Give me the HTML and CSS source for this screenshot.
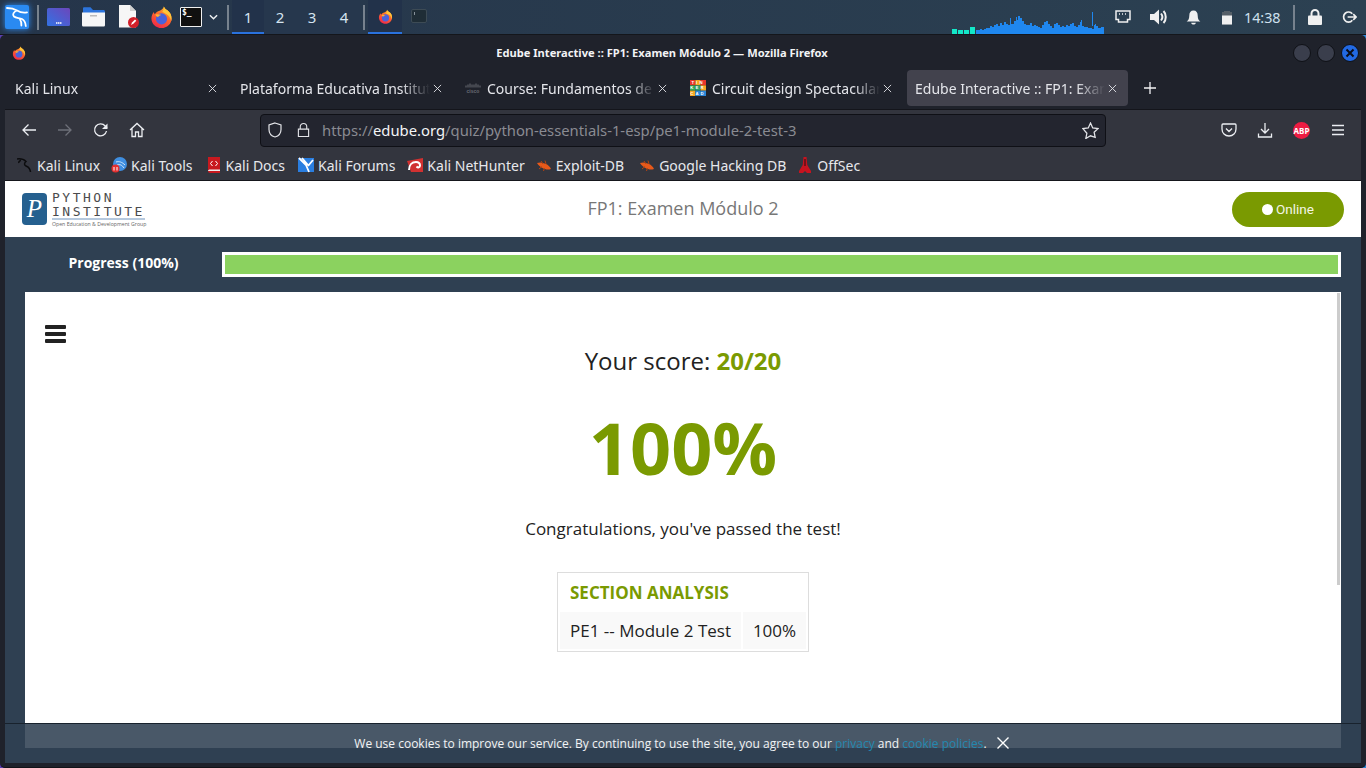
FILE: index.html
```html
<!DOCTYPE html>
<html lang="en">
<head>
<meta charset="utf-8">
<title>Edube Interactive :: FP1: Examen Módulo 2</title>
<link rel="stylesheet" href="styles.css">
</head>
<body>
<svg class="defs" width="0" height="0" aria-hidden="true">
  <defs>
    <linearGradient id="ffBody" x1="0.8" y1="0" x2="0.3" y2="1">
      <stop offset="0" stop-color="#ffbd2e"/><stop offset="0.45" stop-color="#ff6a2b"/><stop offset="1" stop-color="#f0284a"/>
    </linearGradient>
    <linearGradient id="launcher" x1="0" y1="1" x2="1" y2="0">
      <stop offset="0" stop-color="#3273e4"/><stop offset="1" stop-color="#6c46bb"/>
    </linearGradient>
    <symbol id="firefox" viewBox="0 0 24 24">
      <path d="M14.500 1c.6 2.200 2.400 3 4 4.300 2.700 2.200 4 5 4 8.200 0 5.800-4.700 10-10.500 10S1.500 19.300 1.500 13.500c0-2.600 1-5.100 2.600-6.800 0 1 .3 1.800 1 2.500C6 6.800 8 6.300 10 5.500c2.200-.9 4-2.300 4.500-4.500z" fill="url(#ffBody)"/>
      <path d="M14.500 1c.6 2.200 2.400 3 4 4.300 2.700 2.200 4 5 4 8.200 0 1-.1 1.800-.4 2.600-.6-3.500-2.600-6.200-5.600-7.600-1.200-.6-2.600-1-3.700-1.900C13.700 5.500 14.500 3.500 14.500 1z" fill="#ffc53a"/>
      <circle cx="12" cy="14" r="5.800" fill="#4a62dc"/>
      <path d="M5.500 9.500c2-.6 4.500-.6 6.500.5-1.500.2-3 1-3.500 2.200-1.300-.3-2.400-1.300-3-2.700z" fill="#ffb02e"/>
    </symbol>
    <symbol id="bug" viewBox="0 0 16 16">
      <path d="M1 6c3-1 6-.5 9 1 2 1 4 2.500 5 5-3 1-6 .5-8.500-1C4.500 10 2.500 8.500 1 6z" fill="#e8591a"/>
      <path d="M5 4l2 3M9 3.500l1 3.500M3 12l3-2.500M7.500 14l1-3" stroke="#b8430f" stroke-width="1" fill="none"/>
    </symbol>
  </defs>
</svg>

<header class="panel">
  <div class="kali-btn">
    <svg class="kali-logo" viewBox="0 0 24 24"><rect x="0" y="0" width="24" height="24" rx="2" fill="#2a8af2"/><path d="M2 3c4 0 7 .6 10 2.500 3 1.800 6 2.500 10 1.800M12 5.500C8.500 7 7 9.500 9 11.500c2 1.800 5.500 1.200 8 2.500 2.300 1.200 3.500 3.500 3.800 7M15 14.500c1.200 1.500 1.600 3.500 1.400 6" fill="none" stroke="#fff" stroke-width="1.800" stroke-linecap="round"/></svg>
  </div>
  <span class="sep"></span>
  <div class="launchers">
    <svg class="launch" viewBox="0 0 23 24"><rect y="3" width="23" height="18" rx="1.500" fill="url(#launcher)"/><path d="M9 18h1.500M11 18h1.500M13 18h1.500" stroke="#fff" stroke-width="1.500"/></svg>
    <svg class="launch" viewBox="0 0 23 24"><path d="M1 7V3.500c0-.8.500-1.200 1.200-1.200h6.300L11 5h10.500c.8 0 1.500.7 1.500 1.500V8H1z" fill="#2c74dc"/><path d="M0 7.500h23V20c0 1-.7 1.500-1.500 1.500h-20C.7 21.500 0 21 0 20z" fill="#f6f6f6"/><path d="M8 10h7v1.500H8z" fill="#bbb"/></svg>
    <svg class="launch doc" viewBox="0 0 22 24"><path d="M1 0h11l6 6v16.500H1z" fill="#f6f6f6"/><path d="M12 0l6 6h-6z" fill="#d0d0d0"/><circle cx="15.500" cy="17.500" r="5.500" fill="#d2202a"/><path d="M13 20l1-2.500 3-3 1.300 1.300-3 3z" fill="#fff"/></svg>
    <svg class="launch ff" viewBox="0 0 24 24"><use href="#firefox"/></svg>
    <div class="term-ico"><span class="term-txt">$_</span></div>
    <svg class="chev" viewBox="0 0 10 6"><path d="M1 1l4 4 4-4" fill="none" stroke="#eef0f2" stroke-width="1.600"/></svg>
  </div>
  <span class="sep"></span>
  <nav class="pager">
    <span class="desk is-on">1</span><span class="desk">2</span><span class="desk">3</span><span class="desk">4</span>
  </nav>
  <span class="sep sep-c"></span>
  <div class="task is-on"><svg class="task-ff" viewBox="0 0 24 24"><use href="#firefox"/></svg></div>
  <div class="task"><div class="term-dim"><span></span></div></div>
  <div class="spacer"></div>
  <div class="meter">
    <span class="lvl lvl-5"></span><span class="lvl lvl-3"></span><span class="lvl lvl-3"></span><span class="lvl lvl-7"></span>
  </div>
  <svg class="graph" viewBox="0 0 128 22"><path fill="#1f87ef" d="M0 22V18H4V17H6V18H8V17H10V16H14V14H16V15H18V13H20V12H22V14H24V11H26V13H28V10H30V12H32V13H34V6H35V12H38V9H40V5H41V8H42V4H44V6H46V9H48V12H50V13H54V11H56V14H58V13H60V14H62V15H64V16H66V13H68V10H70V9H72V12H74V14H76V16H78V12H80V11H82V13H84V15H86V14H88V15H90V13H92V14H94V12H96V11H98V14H100V15H102V13H104V10H105V8H106V14H108V15H112V16H116V17H118V13H119V12H120V14H122V16H125V15H128V22Z"/><path d="M116.500 0v14" stroke="#1f87ef" stroke-width="1"/></svg>
  <div class="tray">
    <svg class="tray-i" viewBox="0 0 16 14"><path d="M1 1h14v8.500h-2.500V12h-9V9.500H1z" fill="none" stroke="#f0f0f0" stroke-width="1.500"/><path d="M4 4h1M7 4h1M10 4h1" stroke="#f0f0f0" stroke-width="1.500"/></svg>
    <svg class="tray-i" viewBox="0 0 18 16"><path d="M0 5h4l5-4.500v15L4 11H0z" fill="#f0f0f0"/><path d="M11 4.500c1.600 2 1.600 5 0 7M13.500 2c3 3 3 9 0 12" fill="none" stroke="#f0f0f0" stroke-width="2"/></svg>
    <svg class="tray-i" viewBox="0 0 16 16"><path d="M8 .5c3 0 4.500 2.200 4.500 5.500 0 3 .8 4.500 2.800 6.300H.7C2.700 10.500 3.500 9 3.500 6 3.500 2.700 5 .5 8 .5z" fill="#f0f0f0"/><path d="M5.500 13.500h5c0 1.200-1.200 2-2.500 2s-2.500-.8-2.500-2z" fill="#f0f0f0"/></svg>
    <svg class="tray-b" viewBox="0 0 10 14"><path d="M2 1.500V.5h6v1h2V14H0V1.500z" fill="#555f68"/><path d="M0 5h10v9H0z" fill="#f0f0f0"/></svg>
    <time class="clock">14:38</time>
    <span class="sep sep-d"></span>
    <svg class="tray-l" viewBox="0 0 14 16"><path d="M3.500 7V4.500a3.500 3.500 0 017 0V7" fill="none" stroke="#f0f0f0" stroke-width="2"/><rect y="6.500" width="14" height="9.500" rx="1" fill="#f0f0f0"/></svg>
    <svg class="tray-o" viewBox="0 0 16 14"><path d="M11 3.500A5 5 0 103 10.500a5 5 0 008 0" fill="none" stroke="#f0f0f0" stroke-width="1.800"/><path d="M6 7h9M12 4l3 3-3 3" fill="none" stroke="#f0f0f0" stroke-width="1.800"/></svg>
  </div>
</header>

<div class="window">
  <div class="titlebar">
    <svg class="title-ff" viewBox="0 0 24 24"><use href="#firefox"/></svg>
    <h1 class="title">Edube Interactive :: FP1: Examen Módulo 2 — Mozilla Firefox</h1>
    <div class="winbtns">
      <span class="winbtn"></span><span class="winbtn"></span>
      <span class="winbtn winbtn-close"><svg viewBox="0 0 10 10"><path d="M1.500 1.500l7 7M8.500 1.500l-7 7" stroke="#0b0e18" stroke-width="2"/></svg></span>
    </div>
  </div>

  <div class="tabs">
    <div class="tab"><span class="tab-label">Kali Linux</span><svg class="tab-x" viewBox="0 0 10 10"><path d="M1 1l8 8M9 1l-8 8"/></svg></div>
    <div class="tab"><span class="tab-label">Plataforma Educativa Instituto</span><svg class="tab-x" viewBox="0 0 10 10"><path d="M1 1l8 8M9 1l-8 8"/></svg></div>
    <div class="tab">
      <svg class="tab-ico" viewBox="0 0 16 16"><path d="M1 5.500v2M3 4.500v3M5 3.500v4M7 4.500v3M9 4.500v3M11 3.500v4M13 4.500v3M15 5.500v2" stroke="#6a6c74" stroke-width="1"/><text x="8" y="13" text-anchor="middle" class="cisco">cisco</text></svg>
      <span class="tab-label">Course: Fundamentos de Python</span><svg class="tab-x" viewBox="0 0 10 10"><path d="M1 1l8 8M9 1l-8 8"/></svg>
    </div>
    <div class="tab">
      <svg class="tab-ico" viewBox="0 0 15 15"><rect width="5" height="5" fill="#e8352b"/><rect x="5" width="5" height="5" fill="#f5a623"/><rect x="10" width="5" height="5" fill="#e8352b"/><rect y="5" width="5" height="5" fill="#36a853"/><rect x="5" y="5" width="5" height="5" fill="#2e9e6a"/><rect x="10" y="5" width="5" height="5" fill="#f5a623"/><rect y="10" width="5" height="5" fill="#f5a623"/><rect x="5" y="10" width="5" height="5" fill="#2b87d8"/><rect x="10" y="10" width="5" height="5" fill="#2b87d8"/><text class="tink" x="7.500" y="3.800">TIN</text><text class="tink" x="7.500" y="8.800">KER</text><text class="tink" x="7.500" y="13.800">CAD</text></svg>
      <span class="tab-label">Circuit design Spectacular Jaagub</span><svg class="tab-x" viewBox="0 0 10 10"><path d="M1 1l8 8M9 1l-8 8"/></svg>
    </div>
    <div class="tab is-active"><span class="tab-label">Edube Interactive :: FP1: Examen</span><svg class="tab-x" viewBox="0 0 10 10"><path d="M1 1l8 8M9 1l-8 8"/></svg></div>
    <svg class="newtab" viewBox="0 0 12 12"><path d="M6 0v12M0 6h12"/></svg>
  </div>

  <div class="navbar">
    <svg class="nav-i nav-back" viewBox="0 0 16 16"><path d="M15 8H2M7.500 2.500L2 8l5.500 5.500"/></svg>
    <svg class="nav-i nav-fwd" viewBox="0 0 16 16"><path d="M1 8h13M8.500 2.500L14 8l-5.500 5.500"/></svg>
    <svg class="nav-i nav-rel" viewBox="0 0 16 16"><path d="M13.500 9a6 6 0 11-1.300-5L14 6"/><path class="fillme" d="M14.500 1.500V7H9z"/></svg>
    <svg class="nav-i nav-home" viewBox="0 0 16 16"><path d="M1 8l7-6.500L15 8M3 6.500V14.500h3.500V10h3v4.500H13V6.500"/></svg>
    <div class="urlbar">
      <svg class="url-i url-shield" viewBox="0 0 16 16"><path d="M8 1l6 2v4.500c0 4-2.500 6.500-6 7.500-3.500-1-6-3.500-6-7.500V3z"/></svg>
      <svg class="url-i url-lock" viewBox="0 0 14 16"><path d="M3.500 7V4.500a3.500 3.500 0 017 0V7M1.500 7h11v8h-11z"/></svg>
      <span class="url"><span class="url-dim">https://</span>edube.org<span class="url-dim">/quiz/python-essentials-1-esp/pe1-module-2-test-3</span></span>
      <svg class="url-i url-star" viewBox="0 0 16 16"><path d="M8 1l2.100 4.600 5 .6-3.700 3.400 1 4.900L8 13l-4.400 2.500 1-4.900L.9 6.200l5-.6z"/></svg>
    </div>
    <div class="nav-right">
      <svg class="nav-i" viewBox="0 0 16 16"><path d="M2 2h12c.6 0 1 .4 1 1v4c0 4-3 7-7 7s-7-3-7-7V3c0-.6.400-1 1-1zM5 6.500l3 3 3-3"/></svg>
      <svg class="nav-i" viewBox="0 0 16 16"><path d="M8 1v9.500M4 7l4 4 4-4M1.500 11.500V15h13v-3.500"/></svg>
      <div class="abp">ABP</div>
      <svg class="nav-i" viewBox="0 0 16 16"><path d="M2 3.500h12M2 8h12M2 12.500h12"/></svg>
    </div>
  </div>

  <div class="bookmarks">
    <a class="bm"><svg class="bm-i" viewBox="0 0 16 16"><path d="M0 2c4-.5 7 .5 9 2.500C7 6 7 8 9 9c2 1 4 1.500 4.500 6M4 3.500C2 4 1.500 5 2 6" fill="none" stroke="#0c0c0e" stroke-width="1.500"/></svg>Kali Linux</a>
    <a class="bm"><svg class="bm-i" viewBox="0 0 16 16"><circle cx="9" cy="7" r="7" fill="#3f8ee0"/><path d="M5 5c3-1 6 0 9 3M6 8c3-1 5 0 7 3" stroke="#cfe6fa" fill="none"/><circle cx="4.500" cy="11.500" r="4" fill="#e43030"/><path d="M3 10v3.500M6 10v3.500" stroke="#fff"/></svg>Kali Tools</a>
    <a class="bm"><svg class="bm-i" viewBox="0 0 14 16"><path d="M1 0h12v16H3c-1 0-2-.8-2-2z" fill="#c8191f"/><path d="M1 14c0-1 1-1.500 2-1.500h10V14H3z" fill="#eee"/><path d="M5.500 4L3.500 6.500 5.500 9M8.500 4l2 2.500-2 2.500" stroke="#fff" fill="none"/></svg>Kali Docs</a>
    <a class="bm"><svg class="bm-i" viewBox="0 0 16 16"><rect y="1" width="16" height="14" fill="#2a7ee0"/><path d="M1 1l7 7 3 7M4 1l6 7M15 3l-5 6" stroke="#fff" stroke-width="1.800" fill="none"/></svg>Kali Forums</a>
    <a class="bm"><svg class="bm-i" viewBox="0 0 16 16"><path d="M0 4l16-3v14H4z" fill="#d13131"/><path d="M2 13c0-5 3-8 7-8 2.500 0 4 1.500 4 3.500S11 11 9.500 9.500" fill="none" stroke="#fff" stroke-width="2"/></svg>Kali NetHunter</a>
    <a class="bm"><svg class="bm-i" viewBox="0 0 16 16"><use href="#bug"/></svg>Exploit-DB</a>
    <a class="bm"><svg class="bm-i" viewBox="0 0 16 16"><use href="#bug"/></svg>Google Hacking DB</a>
    <a class="bm"><svg class="bm-i" viewBox="0 0 14 16"><path d="M5.500 0h3l.8 8 3.700 6v2H9L7 14l-2 2H1v-2l3.700-6z" fill="#c7131f"/><path d="M6.500 2h1v7h-1z" fill="#2a0c10"/></svg>OffSec</a>
  </div>

  <main class="page">
    <div class="site-head">
      <div class="logo">
        <div class="logo-mark">P</div>
        <div class="logo-text">
          <span class="logo-l1">PYTHON</span>
          <span class="logo-l2">INSTITUTE</span>
          <span class="logo-l3">Open Education &amp; Development Group</span>
        </div>
      </div>
      <h2 class="quiz-name">FP1: Examen Módulo 2</h2>
      <div class="head-end"><div class="online"><span class="dot"></span>Online</div></div>
    </div>

    <div class="progress-row">
      <div class="progress-label">Progress (100%)</div>
      <div class="progress-track"><div class="progress-fill"></div></div>
    </div>

    <section class="card">
      <div class="burger"><span></span><span></span><span></span></div>
      <p class="score">Your score: <b>20/20</b></p>
      <p class="percent">100%</p>
      <p class="congrats">Congratulations, you've passed the test!</p>
      <table class="analysis">
        <colgroup><col class="col-name"><col class="col-val"></colgroup>
        <tr><th colspan="2">SECTION ANALYSIS</th></tr>
        <tr><td class="c-name">PE1 -- Module 2 Test</td><td class="c-val">100%</td></tr>
      </table>
      <div class="scrollthumb"></div>
    </section>

    <div class="cookie">
      <span>We use cookies to improve our service. By continuing to use the site, you agree to our <a class="lnk">privacy</a> and <a class="lnk">cookie policies</a>.</span>
      <svg class="cookie-x" viewBox="0 0 12 12"><path d="M.5.500l11 11M11.500.500l-11 11"/></svg>
    </div>
  </main>
</div>
</body>
</html>
```
FILE: styles.css
```css
* { box-sizing: border-box; }
html, body { margin: 0; padding: 0; }
body {
  width: 1366px; height: 768px; overflow: hidden;
  display: flex; flex-direction: column;
  font-family: "Noto Sans", sans-serif;
  background: linear-gradient(45deg, #5a3fb0 0 50%, #2a86d8 50% 100%);
}
.defs { position: absolute; }

/* desktop panel */
.panel {
  height: 35px; flex: none; display: flex; align-items: flex-start;
  background: linear-gradient(90deg, #25354a, #2c4152);
  border-bottom: 1px solid #14161b;
  color: #dfe8f0;
}
.kali-btn { width: 37px; height: 34px; padding: 5px 0 0 5px; flex: none; }
.kali-logo { width: 24px; height: 24px; display: block; filter: drop-shadow(0 0 3px #2a8af2); }
.sep { width: 2px; height: 25px; margin-top: 5px; background: #77828e; flex: none; }
.launchers { display: flex; align-items: center; height: 34px; width: 188px; flex: none; }
.launch { flex: none; width: 23px; height: 24px; display: block; }
.launchers .launch:nth-child(1) { margin-left: 8px; }
.launchers .launch:nth-child(2) { margin-left: 12px; }
.launchers .doc { margin-left: 13px; width: 22px; }
.launchers .ff { margin-left: 10px; margin-right: 7px; }
.term-ico { width: 22px; height: 20px; background: #101010; border: 1px solid #f0f0f0; border-radius: 1px; flex: none; }
.term-txt { display: block; font: bold 8px/10px "DejaVu Sans Mono", monospace; color: #fff; padding-left: 1px; }
.chev { width: 9px; height: 6px; margin-left: 7px; flex: none; }
.pager { display: flex; margin-left: 3px; flex: none; background: #26374d; }
.desk { width: 32px; height: 34px; text-align: center; font-size: 15px; line-height: 34px; color: #d5e4f0; border-bottom: 2px solid transparent; }
.is-on { background: #22324a; border-bottom: 2px solid #2a72de; }
.sep-c { margin-left: 3px; }
.task { width: 34px; height: 34px; display: flex; align-items: center; justify-content: center; flex: none; border-bottom: 2px solid transparent; }
.is-on.task { margin-left: 3px; border-bottom-color: #2a72de; }
.task-ff { width: 15px; height: 15px; }
.term-dim { width: 16px; height: 14px; background: #1f2d36; border: 1px solid #3d4b55; border-radius: 2px; }
.term-dim span { display: block; width: 4px; height: 3px; margin: 2px; border-left: 1px solid #87919a; }
.spacer { flex: 1; }
.meter { display: flex; align-items: flex-end; gap: 1px; height: 34px; width: 24px; flex: none; }
.lvl { width: 5px; background: #13e8c8; }
.lvl-3 { height: 4px; }
.lvl-5 { height: 5px; }
.lvl-7 { height: 7px; }
.graph { width: 128px; height: 22px; margin-top: 12px; flex: none; display: block; }
.tray { display: flex; align-items: center; height: 34px; flex: none; width: 262px; }
.tray-i { flex: none; display: block; }
.tray-i:nth-child(1) { width: 16px; height: 14px; margin-left: 11px; }
.tray-i:nth-child(2) { width: 18px; height: 16px; margin-left: 19px; }
.tray-i:nth-child(3) { width: 15px; height: 15px; margin-left: 18px; }
.tray-b { width: 10px; height: 15px; margin-left: 21px; flex: none; }
.clock { font-size: 14.300px; color: #cfe0ee; margin-left: 12px; width: 38px; flex: none; white-space: nowrap; }
.sep-d { margin: 0 0 0 11px; height: 25px; }
.tray-l { width: 14px; height: 16px; margin-left: 13px; flex: none; }
.tray-o { width: 15px; height: 14px; margin-left: 20px; flex: none; }

/* browser window */
.window {
  flex: 1; min-height: 0; display: flex; flex-direction: column;
  background: #1f222b; padding: 0 5px 4px;
  border-radius: 5px; border-bottom: 1px solid #111318;
}
.titlebar { height: 35px; flex: none; display: flex; align-items: center; margin: 0 -5px; position: relative; }
.title-ff { width: 14px; height: 14px; margin-left: 12px; flex: none; }
.title { position: absolute; left: 0; right: 42px; margin: 0; text-align: center; font-size: 11.130px; font-weight: 700; color: #f2f3f5; }
.winbtns { margin-left: auto; display: flex; gap: 6px; padding-right: 7px; }
.winbtn { width: 18px; height: 18px; border-radius: 50%; background: #3a3e4c; border: 1px solid #0f1116; display: block; }
.winbtn-close { background: #2269e2; padding: 3px; }
.winbtn-close svg { display: block; width: 10px; height: 10px; }

.tabs { height: 40px; flex: none; display: flex; gap: 4px; padding-left: 2px; border-bottom: 1px solid #14151b; }
.tab { width: 221px; height: 36px; padding: 0 8px; display: flex; align-items: center; flex: none; color: #e4e5ea; font-size: 14px; border-radius: 4px; }
.tab.is-active { background: #42424d; }
.tab-label { flex: 1; min-width: 0; white-space: nowrap; overflow: hidden; -webkit-mask-image: linear-gradient(90deg, #000 85%, transparent); mask-image: linear-gradient(90deg, #000 85%, transparent); }
.tab-ico { width: 16px; height: 16px; margin-right: 6px; flex: none; }
.cisco { font: 700 5px "Liberation Sans", sans-serif; fill: #6a6c74; }
.tink { font: 700 4px "Liberation Sans", sans-serif; fill: #fff; text-anchor: middle; letter-spacing: 2px; }
.tab-x { width: 9px; height: 9px; margin-left: 3px; margin-right: 3px; flex: none; }
.tab-x path { stroke: #e4e5ea; stroke-width: 1; fill: none; }
.newtab { width: 12px; height: 12px; margin: 12px 0 0 12px; flex: none; }
.newtab path { stroke: #f2f2f4; stroke-width: 1.300; fill: none; }

.navbar { height: 40px; flex: none; display: flex; align-items: center; background: #33353e; padding-left: 16px; }
.nav-i { width: 16px; height: 16px; flex: none; fill: none; stroke: #eceef2; stroke-width: 1.300; display: block; }
.nav-i .fillme { fill: #eceef2; stroke: none; }
.nav-fwd { margin-left: 20px; stroke: #6e7079; }
.nav-rel { margin-left: 20px; }
.nav-home { margin-left: 20px; }
.urlbar { width: 846px; height: 33px; margin-left: 115px; flex: none; display: flex; align-items: center; background: #23252f; border: 1px solid #0f1016; border-radius: 4px; padding: 0 6px; color: #f4f4f6; font-size: 14.800px; }
.url-i { fill: none; stroke: #e3e4e8; stroke-width: 1.200; flex: none; display: block; }
.url-shield { width: 16px; height: 16px; }
.url-lock { width: 13px; height: 16px; margin-left: 14px; }
.url { margin-left: 12px; flex: 1; white-space: nowrap; }
.url-dim { color: #8a8b92; }
.url-star { width: 17px; height: 17px; }
.nav-right { display: flex; align-items: center; gap: 20px; margin-left: 115px; }
.abp { width: 17px; height: 17px; flex: none; border-radius: 50%; background: #ed1c42; color: #fff; font-size: 8px; font-weight: 700; line-height: 17px; text-align: center; }

.bookmarks { height: 31px; flex: none; display: flex; align-items: center; background: #33353e; padding-left: 12px; border-bottom: 1px solid #15161b; gap: 11px; }
.bm { display: flex; align-items: center; gap: 4px; color: #e7e8ec; font-size: 14px; white-space: nowrap; }
.bm:nth-child(3), .bm:nth-child(4) { margin-left: 2px; }
.bm:nth-child(5) { margin-left: 1px; }
.bm:nth-child(7) { margin-left: 4px; }
.bm-i { width: 16px; height: 16px; flex: none; display: block; }

/* web page */
.page { flex: 1; min-height: 0; position: relative; display: flex; flex-direction: column; background: #2f4052; padding-bottom: 15px; overflow: hidden; font-family: "Open Sans", sans-serif; }
.site-head { height: 56px; flex: none; background: #fff; display: grid; grid-template-columns: 1fr auto 1fr; align-items: center; padding: 0 17px; }
.logo { display: flex; gap: 5px; align-items: flex-start; }
.logo-mark { width: 25px; height: 32px; margin-top: 2px; border-radius: 4px; background: #25608f; color: #fff; font: italic 25px/32px "Liberation Serif", serif; text-align: center; }
.logo-text { display: flex; flex-direction: column; color: #4b4b4d; font-family: "DejaVu Sans Mono", monospace; width: 93px; }
.logo-l1 { font-size: 13px; line-height: 14px; letter-spacing: 2.500px; white-space: nowrap; }
.logo-l2 { font-size: 13px; line-height: 13px; letter-spacing: 2.500px; white-space: nowrap; border-bottom: 2px solid #b6c9de; }
.logo-l3 { font-family: "Open Sans", sans-serif; font-size: 5.200px; line-height: 8px; color: #666; white-space: nowrap; }
.quiz-name { margin: 0 0 2px; font-size: 18px; font-weight: 400; color: #777; white-space: nowrap; }
.head-end { display: flex; justify-content: flex-end; }
.online { width: 112px; height: 35px; border-radius: 18px; background: #7a9a01; color: #f4f6e6; font-family: "Roboto", sans-serif; font-size: 13.500px; display: flex; align-items: center; justify-content: center; gap: 3px; }
.dot { width: 11px; height: 11px; border-radius: 50%; background: #fff; }

.progress-row { height: 55px; flex: none; display: flex; align-items: flex-start; padding: 15px 20px; }
.progress-label { width: 197px; flex: none; text-align: center; color: #fff; font-size: 14px; font-weight: 700; line-height: 22px; }
.progress-track { flex: 1; height: 25px; border: 3px solid #fff; background: #fff; }
.progress-fill { height: 100%; background: #8bd25f; }

.card { flex: 1; min-height: 0; margin: 0 20px; background: #fff; display: flex; flex-direction: column; align-items: center; position: relative; color: #222; }
.burger { align-self: flex-start; margin: 33px 0 0 20px; width: 21px; height: 18px; display: flex; flex-direction: column; justify-content: space-between; }
.burger span { height: 4px; background: #222; border-radius: 1px; }
.score { margin: 1px 0 0; font-size: 24px; line-height: 34px; }
.score b { color: #7a9a01; }
.percent { margin: 19px 0 0; font-size: 72px; line-height: 100px; font-weight: 700; color: #7a9a01; }
.congrats { margin: 20px 0 0; font-size: 17px; line-height: 24px; }
.analysis { margin-top: 31px; width: 252px; border: 1px solid #ddd; border-collapse: separate; border-spacing: 2px; table-layout: fixed; }
.col-name { width: 181px; }
.col-val { width: 63px; }
.analysis th { height: 35px; padding: 0 0 0 10px; text-align: left; color: #7a9a01; font-size: 17px; font-weight: 700; white-space: nowrap; }
.analysis td { height: 37px; padding: 0; background: #f9f9f9; font-size: 17px; color: #222; }
.c-name { padding-left: 10px !important; white-space: nowrap; }
.c-val { text-align: center; }
.scrollthumb { position: absolute; top: 1px; right: 1px; width: 3px; height: 292px; background: #ccc; }

.cookie { position: absolute; left: 0; right: 0; bottom: 0; height: 40px; display: flex; align-items: center; justify-content: center; gap: 10px; background: rgba(47, 64, 82, .875); border-top: 1px solid #18222d; color: #f2f4f6; font-size: 12px; padding-right: 3px; }
.lnk { color: #2388b0; }
.cookie-x { width: 12px; height: 12px; margin-bottom: 2px; fill: none; stroke: #fff; stroke-width: 1.400; flex: none; }
```
